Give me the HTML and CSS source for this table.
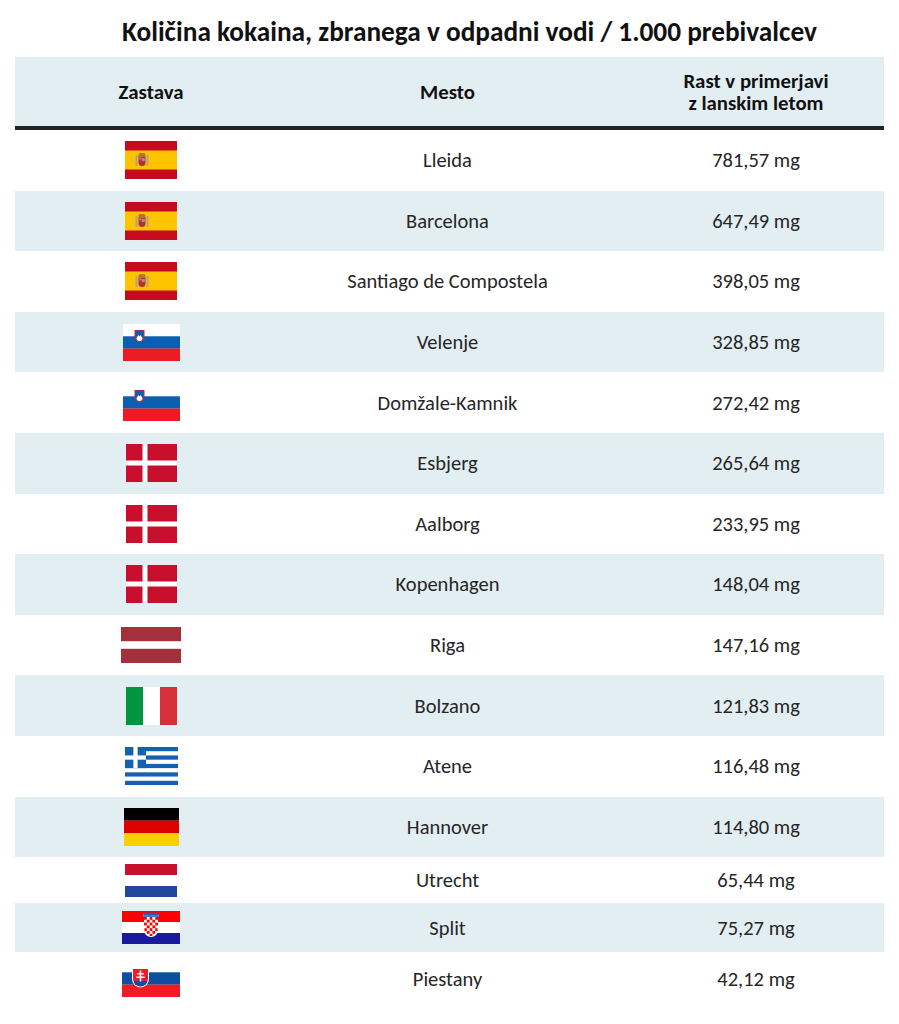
FILE: index.html
```html
<!DOCTYPE html>
<html lang="sl">
<head>
<meta charset="utf-8">
<title>Količina kokaina</title>
<link rel="stylesheet" href="styles.css">
</head>
<body>
<h1 class="title">Količina kokaina, zbranega v odpadni vodi / 1.000 prebivalcev</h1>
<div class="table">
  <div class="head">
    <div class="hcell">Zastava</div>
    <div class="hcell">Mesto</div>
    <div class="hcell hval">Rast v primerjavi<br>z lanskim letom</div>
  </div>

  <div class="row">
    <div class="flag"><svg width="52" height="38" viewBox="0 0 52 38"><rect width="52" height="38" fill="#c60b1e"/><rect y="9.5" width="52" height="19" fill="#ffc400"/><rect x="10.5" y="14" width="2" height="11" fill="#b0a48a"/><rect x="21.5" y="14" width="2" height="11" fill="#b0a48a"/><path d="M13.5 13.5l1-1.5h5l1 1.5v2h-7z" fill="#b5781f"/><path d="M13.5 15.5h7v6a3.5 3.5 0 0 1-7 0z" fill="#b8302a"/><rect x="16.8" y="17" width="3" height="3" fill="#a985c0"/><rect x="14.3" y="16.3" width="2.2" height="2.2" fill="#d07a5a"/></svg></div>
    <div class="city">Lleida</div>
    <div class="val">781,57 mg</div>
  </div>
  <div class="row alt">
    <div class="flag"><svg width="52" height="38" viewBox="0 0 52 38"><rect width="52" height="38" fill="#c60b1e"/><rect y="9.5" width="52" height="19" fill="#ffc400"/><rect x="10.5" y="14" width="2" height="11" fill="#b0a48a"/><rect x="21.5" y="14" width="2" height="11" fill="#b0a48a"/><path d="M13.5 13.5l1-1.5h5l1 1.5v2h-7z" fill="#b5781f"/><path d="M13.5 15.5h7v6a3.5 3.5 0 0 1-7 0z" fill="#b8302a"/><rect x="16.8" y="17" width="3" height="3" fill="#a985c0"/><rect x="14.3" y="16.3" width="2.2" height="2.2" fill="#d07a5a"/></svg></div>
    <div class="city">Barcelona</div>
    <div class="val">647,49 mg</div>
  </div>
  <div class="row">
    <div class="flag"><svg width="52" height="38" viewBox="0 0 52 38"><rect width="52" height="38" fill="#c60b1e"/><rect y="9.5" width="52" height="19" fill="#ffc400"/><rect x="10.5" y="14" width="2" height="11" fill="#b0a48a"/><rect x="21.5" y="14" width="2" height="11" fill="#b0a48a"/><path d="M13.5 13.5l1-1.5h5l1 1.5v2h-7z" fill="#b5781f"/><path d="M13.5 15.5h7v6a3.5 3.5 0 0 1-7 0z" fill="#b8302a"/><rect x="16.8" y="17" width="3" height="3" fill="#a985c0"/><rect x="14.3" y="16.3" width="2.2" height="2.2" fill="#d07a5a"/></svg></div>
    <div class="city">Santiago de Compostela</div>
    <div class="val">398,05 mg</div>
  </div>
  <div class="row alt">
    <div class="flag"><svg width="57" height="37" viewBox="0 0 57 37"><rect width="57" height="12.4" fill="#ffffff"/><rect y="12.3" width="57" height="12.4" fill="#0b5fb0"/><rect y="24.6" width="57" height="12.4" fill="#ed1c24"/><path d="M11.5 6h10v7a5 5 0 0 1-10 0z" fill="#ed1c24"/><path d="M12.5 6.5h8v6.5a4 4 0 0 1-8 0z" fill="#0b5fb0"/><path d="M13.5 14l2-3 1 1.5 1-1.5 2 3a3 3 0 0 1-6 0z" fill="#ffffff"/></svg></div>
    <div class="city">Velenje</div>
    <div class="val">328,85 mg</div>
  </div>
  <div class="row">
    <div class="flag"><svg width="57" height="37" viewBox="0 0 57 37"><rect width="57" height="12.4" fill="#ffffff"/><rect y="12.3" width="57" height="12.4" fill="#0b5fb0"/><rect y="24.6" width="57" height="12.4" fill="#ed1c24"/><path d="M11.5 6h10v7a5 5 0 0 1-10 0z" fill="#ed1c24"/><path d="M12.5 6.5h8v6.5a4 4 0 0 1-8 0z" fill="#0b5fb0"/><path d="M13.5 14l2-3 1 1.5 1-1.5 2 3a3 3 0 0 1-6 0z" fill="#ffffff"/></svg></div>
    <div class="city">Domžale-Kamnik</div>
    <div class="val">272,42 mg</div>
  </div>
  <div class="row alt">
    <div class="flag"><svg width="51" height="38" viewBox="0 0 51 38"><rect width="51" height="38" fill="#c8102e"/><rect x="16.5" width="5" height="38" fill="#ffffff"/><rect y="16.5" width="51" height="5" fill="#ffffff"/></svg></div>
    <div class="city">Esbjerg</div>
    <div class="val">265,64 mg</div>
  </div>
  <div class="row">
    <div class="flag"><svg width="51" height="38" viewBox="0 0 51 38"><rect width="51" height="38" fill="#c8102e"/><rect x="16.5" width="5" height="38" fill="#ffffff"/><rect y="16.5" width="51" height="5" fill="#ffffff"/></svg></div>
    <div class="city">Aalborg</div>
    <div class="val">233,95 mg</div>
  </div>
  <div class="row alt">
    <div class="flag"><svg width="51" height="38" viewBox="0 0 51 38"><rect width="51" height="38" fill="#c8102e"/><rect x="16.5" width="5" height="38" fill="#ffffff"/><rect y="16.5" width="51" height="5" fill="#ffffff"/></svg></div>
    <div class="city">Kopenhagen</div>
    <div class="val">148,04 mg</div>
  </div>
  <div class="row">
    <div class="flag"><svg width="60" height="36" viewBox="0 0 60 36"><rect width="60" height="36" fill="#a3303b"/><rect y="14.2" width="60" height="7.6" fill="#ffffff"/></svg></div>
    <div class="city">Riga</div>
    <div class="val">147,16 mg</div>
  </div>
  <div class="row alt">
    <div class="flag"><svg width="51" height="38" viewBox="0 0 51 38"><rect width="17" height="38" fill="#00963f"/><rect x="17" width="17" height="38" fill="#ffffff"/><rect x="34" width="17" height="38" fill="#d6303a"/></svg></div>
    <div class="city">Bolzano</div>
    <div class="val">121,83 mg</div>
  </div>
  <div class="row">
    <div class="flag"><svg width="53" height="38" viewBox="0 0 53 38"><rect width="53" height="38" fill="#1560b0"/><rect y="4.22" width="53" height="4.22" fill="#fff"/><rect y="12.67" width="53" height="4.22" fill="#fff"/><rect y="21.11" width="53" height="4.22" fill="#fff"/><rect y="29.55" width="53" height="4.22" fill="#fff"/><rect width="21" height="21.11" fill="#1560b0"/><rect x="8.4" width="4.2" height="21.11" fill="#fff"/><rect y="8.44" width="21" height="4.22" fill="#fff"/></svg></div>
    <div class="city">Atene</div>
    <div class="val">116,48 mg</div>
  </div>
  <div class="row alt">
    <div class="flag"><svg width="55" height="38" viewBox="0 0 55 38"><rect width="55" height="12.7" fill="#000000"/><rect y="12.6" width="55" height="12.7" fill="#dd0000"/><rect y="25.3" width="55" height="12.7" fill="#ffce00"/></svg></div>
    <div class="city">Hannover</div>
    <div class="val">114,80 mg</div>
  </div>
  <div class="row r46">
    <div class="flag"><svg width="52" height="33" viewBox="0 0 52 33"><rect width="52" height="11" fill="#c8102e"/><rect y="11" width="52" height="11" fill="#ffffff"/><rect y="22" width="52" height="11" fill="#21469b"/></svg></div>
    <div class="city">Utrecht</div>
    <div class="val">65,44 mg</div>
  </div>
  <div class="row alt r49">
    <div class="flag"><svg width="58" height="33" viewBox="0 0 58 33"><rect width="58" height="11" fill="#ff0000"/><rect y="11" width="58" height="11" fill="#ffffff"/><rect y="22" width="58" height="11" fill="#1a1aa0"/><path d="M21 3h16v3H21z" fill="#3b7fd0"/><path d="M22 2.5l2.5-1 2 1 2.5-1.2 2.5 1.2 2-1 2.5 1V4h-14z" fill="#1f5fb8"/><rect x="22" y="6" width="14" height="11" fill="#ffffff"/><path d="M22 17h14v2a7 7 0 0 1-14 0z" fill="#ffffff"/><g fill="#ff0000"><rect x="22" y="6" width="2.8" height="2.8"/><rect x="27.6" y="6" width="2.8" height="2.8"/><rect x="33.2" y="6" width="2.8" height="2.8"/><rect x="24.8" y="8.8" width="2.8" height="2.8"/><rect x="30.4" y="8.8" width="2.8" height="2.8"/><rect x="22" y="11.6" width="2.8" height="2.8"/><rect x="27.6" y="11.6" width="2.8" height="2.8"/><rect x="33.2" y="11.6" width="2.8" height="2.8"/><rect x="24.8" y="14.4" width="2.8" height="2.8"/><rect x="30.4" y="14.4" width="2.8" height="2.8"/><rect x="22.4" y="17.2" width="2.4" height="2.8"/><rect x="27.6" y="17.2" width="2.8" height="2.8"/><rect x="33.2" y="17.2" width="2.4" height="2.8"/><rect x="24.8" y="20" width="2.8" height="2.8"/><rect x="30.4" y="20" width="2.8" height="2.8"/><rect x="27.6" y="22.8" width="2.8" height="2.2"/></g></svg></div>
    <div class="city">Split</div>
    <div class="val">75,27 mg</div>
  </div>
  <div class="row r53">
    <div class="flag"><svg width="58" height="37" viewBox="0 0 58 37"><rect width="58" height="12.4" fill="#ffffff"/><rect y="12.3" width="58" height="12.4" fill="#0b4ea2"/><rect y="24.6" width="58" height="12.4" fill="#ee1c25"/><path d="M10 8h17v11a8.5 8.5 0 0 1-17 0z" fill="#ffffff"/><path d="M11 9h15v10a7.5 7.5 0 0 1-15 0z" fill="#ee1c25"/><path d="M12 22.5q2-3 4-1.5q2.5-2.5 5 0q2-1.5 4 1.5a7.5 7.5 0 0 1-13 0z" fill="#0b4ea2"/><path d="M17.7 10.5h1.6v11h-1.6zM15 13.2h7v1.4h-7zM14.2 16.4h8.6v1.5h-8.6z" fill="#ffffff"/></svg></div>
    <div class="city">Piestany</div>
    <div class="val">42,12 mg</div>
  </div>
</div>
</body>
</html>
```

FILE: styles.css
```css
* {
  box-sizing: border-box;
}

body {
  margin: 0;
  background: #ffffff;
  color: #1e1e1e;
  font-family: "Carlito", "Lato", "Liberation Sans", sans-serif;
}

.title {
  margin: 0;
  height: 57px;
  padding: 12px 0 0 40px;
  line-height: 40px;
  font-size: 27.3px;
  font-weight: 700;
  text-align: center;
  color: #111111;
}

.table {
  margin: 0 15px;
}

.head {
  display: grid;
  grid-template-columns: 272px 321px 1fr;
  align-items: center;
  height: 73px;
  background: #e3eef2;
  border-bottom: 4px solid #232323;
}

.hcell {
  text-align: center;
  font-size: 20.8px;
  font-weight: 700;
  line-height: 22px;
  color: #111111;
}

.hval {
  padding-left: 20px;
}

.row {
  display: grid;
  grid-template-columns: 272px 321px 1fr;
  align-items: center;
  height: 60.6px;
  font-size: 20.5px;
  color: #262626;
}

.row.alt {
  background: #e3eef2;
}

.row.r46 {
  height: 46px;
}

.row.r49 {
  height: 49px;
}

.row.r53 {
  height: 53px;
}

.flag {
  display: flex;
  justify-content: center;
  align-items: center;
}

.flag svg {
  display: block;
}

.city {
  text-align: center;
}

.val {
  text-align: center;
  padding-left: 20px;
}
```
